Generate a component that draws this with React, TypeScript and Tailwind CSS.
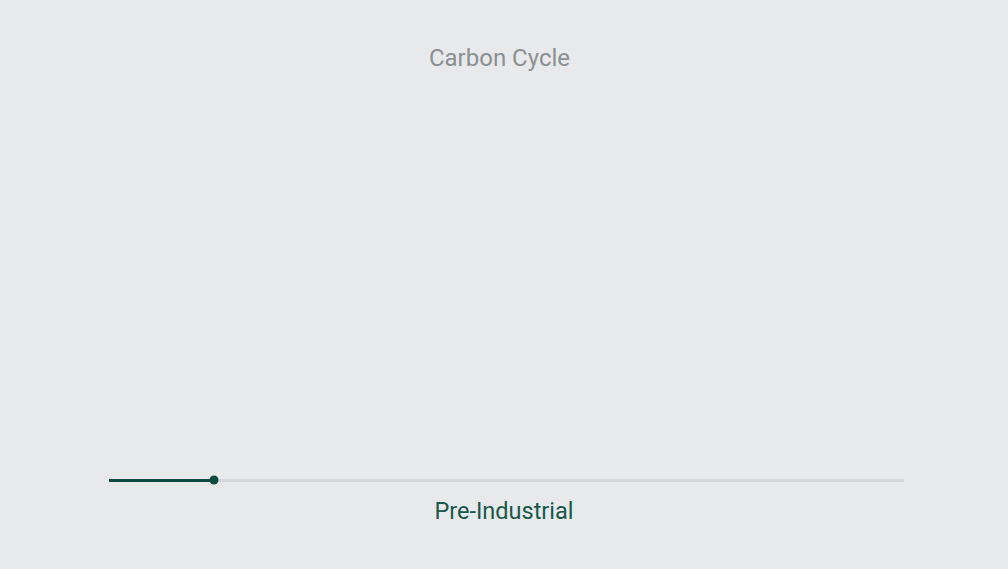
import React from 'react';

export default function App() {
  const progress = 105;

  return (
    <div className="flex h-[569px] w-full flex-col bg-[#e8e9ea] font-['Roboto',_'Liberation_Sans',_sans-serif]">
      <h1 className="mt-[42px] pr-[9px] text-center text-[24px] leading-[32px] font-normal text-[#8b9092]">
        Carbon Cycle
      </h1>

      <div className="flex-1" />

      <div className="ml-[109px] flex h-[10px] w-[795px] items-center">
        <div className="relative h-[3px] w-full bg-[#d7d8d9]">
          <div className="absolute left-0 top-0 h-[3px] bg-[#0c4b3d]" style={{ width: progress }} />
          <div
            className="absolute top-1/2 h-[9px] w-[9px] -translate-x-1/2 -translate-y-1/2 rounded-full bg-[#0c4b3d]"
            style={{ left: progress }}
          />
        </div>
      </div>

      <p className="mt-[10px] mb-[42px] text-center text-[23.5px] leading-[32px] text-[#17584a]">
        Pre-Industrial
      </p>
    </div>
  );
}
